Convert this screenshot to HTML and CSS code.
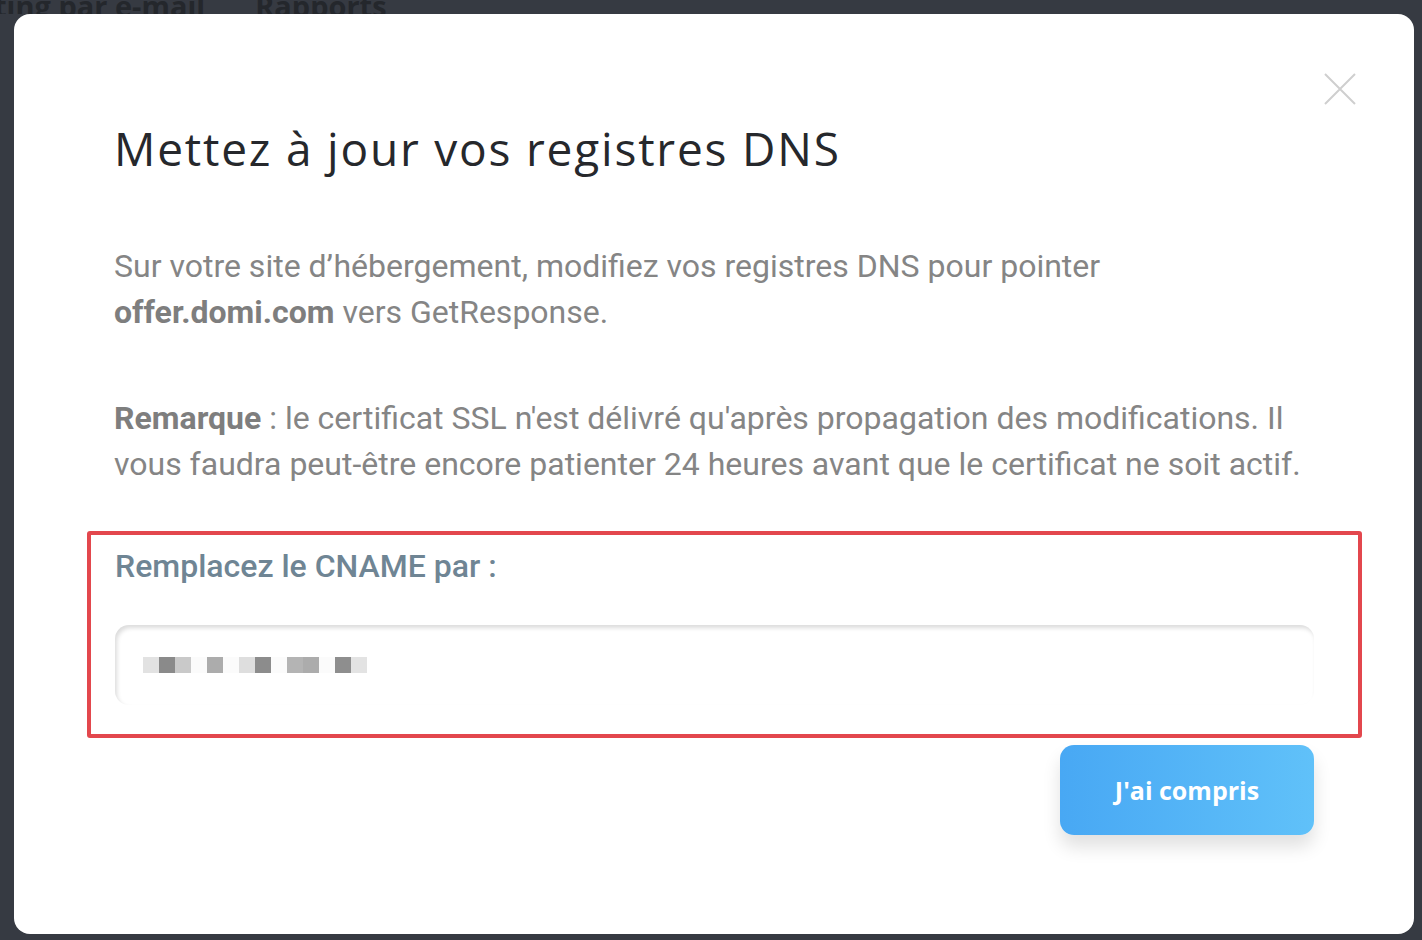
FILE: index.html
```html
<!DOCTYPE html>
<html>
    <head>
        <title>DNS</title>
        <meta charset="UTF-8">
        <link rel="stylesheet" href="styles.css">
    </head>
    <body>
        <div class="nav">
            <span class="nav-item first">ting par e-mail</span>
            <span class="nav-item">Rapports</span>
        </div>
        <div class="overlay">
            <div class="modal">
                <button class="close" aria-label="Fermer">
                    <svg width="32" height="32" viewBox="0 0 32 32">
                        <path d="M1 1 L31 31 M31 1 L1 31" stroke="#cfcfcf" stroke-width="2" fill="none"/>
                    </svg>
                </button>
                <h1 class="title">Mettez à jour vos registres DNS</h1>
                <p class="text">Sur votre site d’hébergement, modifiez vos registres DNS pour pointer <b>offer.domi.com</b> vers GetResponse.</p>
                <p class="text note"><b>Remarque</b> : le certificat SSL n'est délivré qu'après propagation des modifications. Il vous faudra peut-être encore patienter 24 heures avant que le certificat ne soit actif.</p>
                <div class="highlight">
                    <div class="label">Remplacez le CNAME par :</div>
                    <div class="field">
                        <span class="px" style="background:#e2e2e2"></span><span class="px" style="background:#8a8a8a"></span><span class="px" style="background:#c9c9c9"></span><span class="px"></span><span class="px" style="background:#acacac"></span><span class="px"></span><span class="px" style="background:#dedede"></span><span class="px" style="background:#8c8c8c"></span><span class="px"></span><span class="px" style="background:#b4b4b4"></span><span class="px" style="background:#acacac"></span><span class="px"></span><span class="px" style="background:#8e8e8e"></span><span class="px" style="background:#e3e3e3"></span>
                    </div>
                </div>
                <div class="actions">
                    <button class="btn">J'ai compris</button>
                </div>
            </div>
        </div>
    </body>
</html>
```

FILE: styles.css
```css
body{
    margin: 0;
    background: #363a42;
    font-family: Roboto, "Liberation Sans", sans-serif;
    overflow: hidden;
    height: 940px;
}
.nav{
    height: 14px;
    overflow: hidden;
    white-space: nowrap;
    margin-left: -6px;
}
.nav-item{
    display: inline-block;
    font-family: "Open Sans", sans-serif;
    font-weight: 700;
    font-size: 29px;
    line-height: 30px;
    margin-top: -9px;
    color: #24272c;
    vertical-align: top;
}
.nav-item.first{
    margin-right: 46px;
}
.overlay{
    position: absolute;
    top: 14px;
    left: 14px;
    right: 8px;
    bottom: 6px;
}
.modal{
    position: relative;
    background: #fff;
    border-radius: 16px;
    height: 100%;
    box-sizing: border-box;
    padding: 102px 52px 0 100px;
}
.close{
    position: absolute;
    top: 59px;
    right: 58px;
    background: none;
    border: 0;
    padding: 0;
    width: 32px;
    height: 32px;
}
.title{
    margin: 0;
    font-family: "Open Sans", sans-serif;
    font-weight: 400;
    font-size: 46px;
    line-height: 64px;
    letter-spacing: 1.8px;
    color: #26282c;
}
.text{
    margin: 63px 0 0 0;
    font-size: 32px;
    line-height: 46px;
    color: #858585;
    max-width: 1000px;
}
.text b{
    color: #7e7e7e;
    font-weight: 700;
}
.note{
    margin-top: 60px;
    max-width: 1200px;
}
.highlight{
    margin: 44px 0 0 -27px;
    border: 4px solid #e3474d;
    border-radius: 3px;
    padding: 8px 44px 29px 24px;
}
.label{
    font-size: 32px;
    font-weight: 500;
    line-height: 46px;
    color: #6f8594;
}
.field{
    margin-top: 36px;
    height: 80px;
    border-radius: 14px;
    box-shadow: inset 2px 3px 4px rgba(0,0,0,0.14);
    display: flex;
    align-items: center;
    padding-left: 28px;
}
.px{
    width: 16px;
    height: 16px;
    background: #fbfbfb;
}
.actions{
    display: flex;
    justify-content: flex-end;
    padding-right: 48px;
    margin-top: 7px;
}
.btn{
    width: 254px;
    height: 90px;
    border: 0;
    border-radius: 14px;
    background: linear-gradient(90deg, #48a8f4, #60c1f9);
    color: #fff;
    font-family: "Open Sans", sans-serif;
    font-weight: 700;
    font-size: 25px;
    box-shadow: 0 12px 18px rgba(0,0,0,0.12);
}
```
